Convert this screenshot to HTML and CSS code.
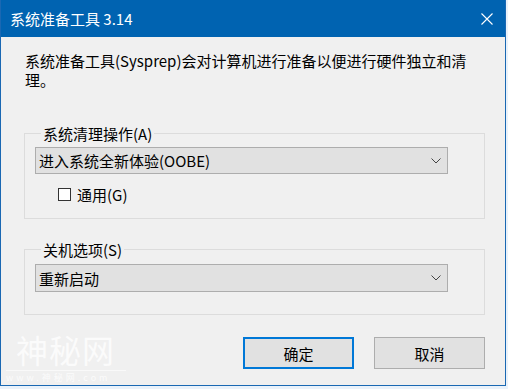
FILE: index.html
```html
<!DOCTYPE html>
<html lang="zh-CN">
<head>
<meta charset="utf-8">
<title>系统准备工具 3.14</title>
<link rel="stylesheet" href="styles.css">
</head>
<body>
<div class="window">
  <div class="titlebar">
    <span class="title">系统准备工具 3.14</span>
    <span class="close">
      <svg width="12" height="12" viewBox="0 0 12 12"><path d="M0.5 0.5L11.5 11.5M11.5 0.5L0.5 11.5" stroke="#fff" stroke-width="1.1" fill="none"/></svg>
    </span>
  </div>
  <div class="content">
    <p class="desc">系统准备工具(Sysprep)会对计算机进行准备以便进行硬件独立和清理。</p>
    <fieldset class="group g1">
      <legend>系统清理操作(A)</legend>
      <div class="combo">
        <span>进入系统全新体验(OOBE)</span>
        <svg class="chev" width="10" height="6" viewBox="0 0 10 6"><path d="M0.5 0.5L5 5L9.5 0.5" stroke="#444" stroke-width="1" fill="none"/></svg>
      </div>
      <label class="check"><span class="box"></span><span>通用(G)</span></label>
    </fieldset>
    <fieldset class="group g2">
      <legend>关机选项(S)</legend>
      <div class="combo tall">
        <span>重新启动</span>
        <svg class="chev" width="10" height="6" viewBox="0 0 10 6"><path d="M0.5 0.5L5 5L9.5 0.5" stroke="#444" stroke-width="1" fill="none"/></svg>
      </div>
    </fieldset>
    <div class="buttons">
      <button class="btn primary">确定</button>
      <button class="btn">取消</button>
    </div>
  </div>
  <div class="watermark">
    <div class="wm-big">神秘网</div>
    <div class="wm-small">www.神秘网.com</div>
  </div>
</div>
</body>
</html>
```

FILE: styles.css
```css
html, body {
  margin: 0;
  padding: 0;
  background: #eaf2fa;
}
body {
  font-family: "Noto Sans CJK SC", "Noto Sans", sans-serif;
  font-size: 15px;
  color: #000;
}
.window {
  position: relative;
  width: 504px;
  height: 385px;
  border: 1px solid #1a68b3;
  border-top: none;
  background: #f0f0f0;
  overflow: hidden;
}
.titlebar {
  height: 37px;
  background: #0063b1;
  display: flex;
  align-items: center;
  color: #fff;
}
.title {
  padding-left: 9px;
  font-size: 15px;
  line-height: 20px;
}
.close {
  margin-left: auto;
  width: 36px;
  display: flex;
  justify-content: center;
  align-items: center;
}
.close svg { display: block; }
.content {
  padding: 14px 20px 0 23px;
}
.desc {
  margin: 0 0 0 1px;
  line-height: 19px;
}
.group {
  margin: 0;
  padding: 4px 0 14px 10px;
  border: 1px solid #dcdcdc;
  min-width: 0;
}
.g1 { margin-top: 35px; }
.g2 { margin-top: 21px; padding-top: 5px; padding-bottom: 22px; }
.group legend {
  margin-left: 6px;
  padding: 0 2px;
  line-height: 19px;
}
.combo {
  width: 408px;
  height: 25px;
  border: 1px solid #adadad;
  background: #e1e1e1;
  display: flex;
  align-items: center;
  padding-left: 3px;
  box-sizing: content-box;
}
.combo.tall { height: 26px; }
.combo span { flex: 1; line-height: 19px; }
.chev {
  display: block;
  margin-right: 6px;
}
.check {
  display: flex;
  align-items: center;
  margin-top: 11px;
  margin-left: 23px;
  line-height: 19px;
}
.box {
  width: 11px;
  height: 11px;
  border: 1px solid #333;
  background: #fff;
  margin-right: 6px;
}
.buttons {
  display: flex;
  justify-content: flex-end;
  gap: 20px;
  margin-top: 22px;
}
.btn {
  width: 111px;
  height: 32px;
  font-family: inherit;
  font-size: 15px;
  color: #000;
  background: #e1e1e1;
  border: 1px solid #adadad;
  padding: 0;
}
.btn.primary {
  border: 2px solid #0078d7;
}
.watermark {
  position: absolute;
  left: 5px;
  top: 330px;
  color: rgba(255, 255, 255, 0.75);
  pointer-events: none;
}
.wm-big {
  font-size: 32px;
  line-height: 38px;
  padding-left: 10px;
  letter-spacing: 1px;
}
.wm-small {
  font-size: 9px;
  line-height: 14px;
  margin-top: 2px;
  border-top: 1px solid rgba(255,255,255,0.6);
  width: 120px;
  letter-spacing: 3px;
}
```
